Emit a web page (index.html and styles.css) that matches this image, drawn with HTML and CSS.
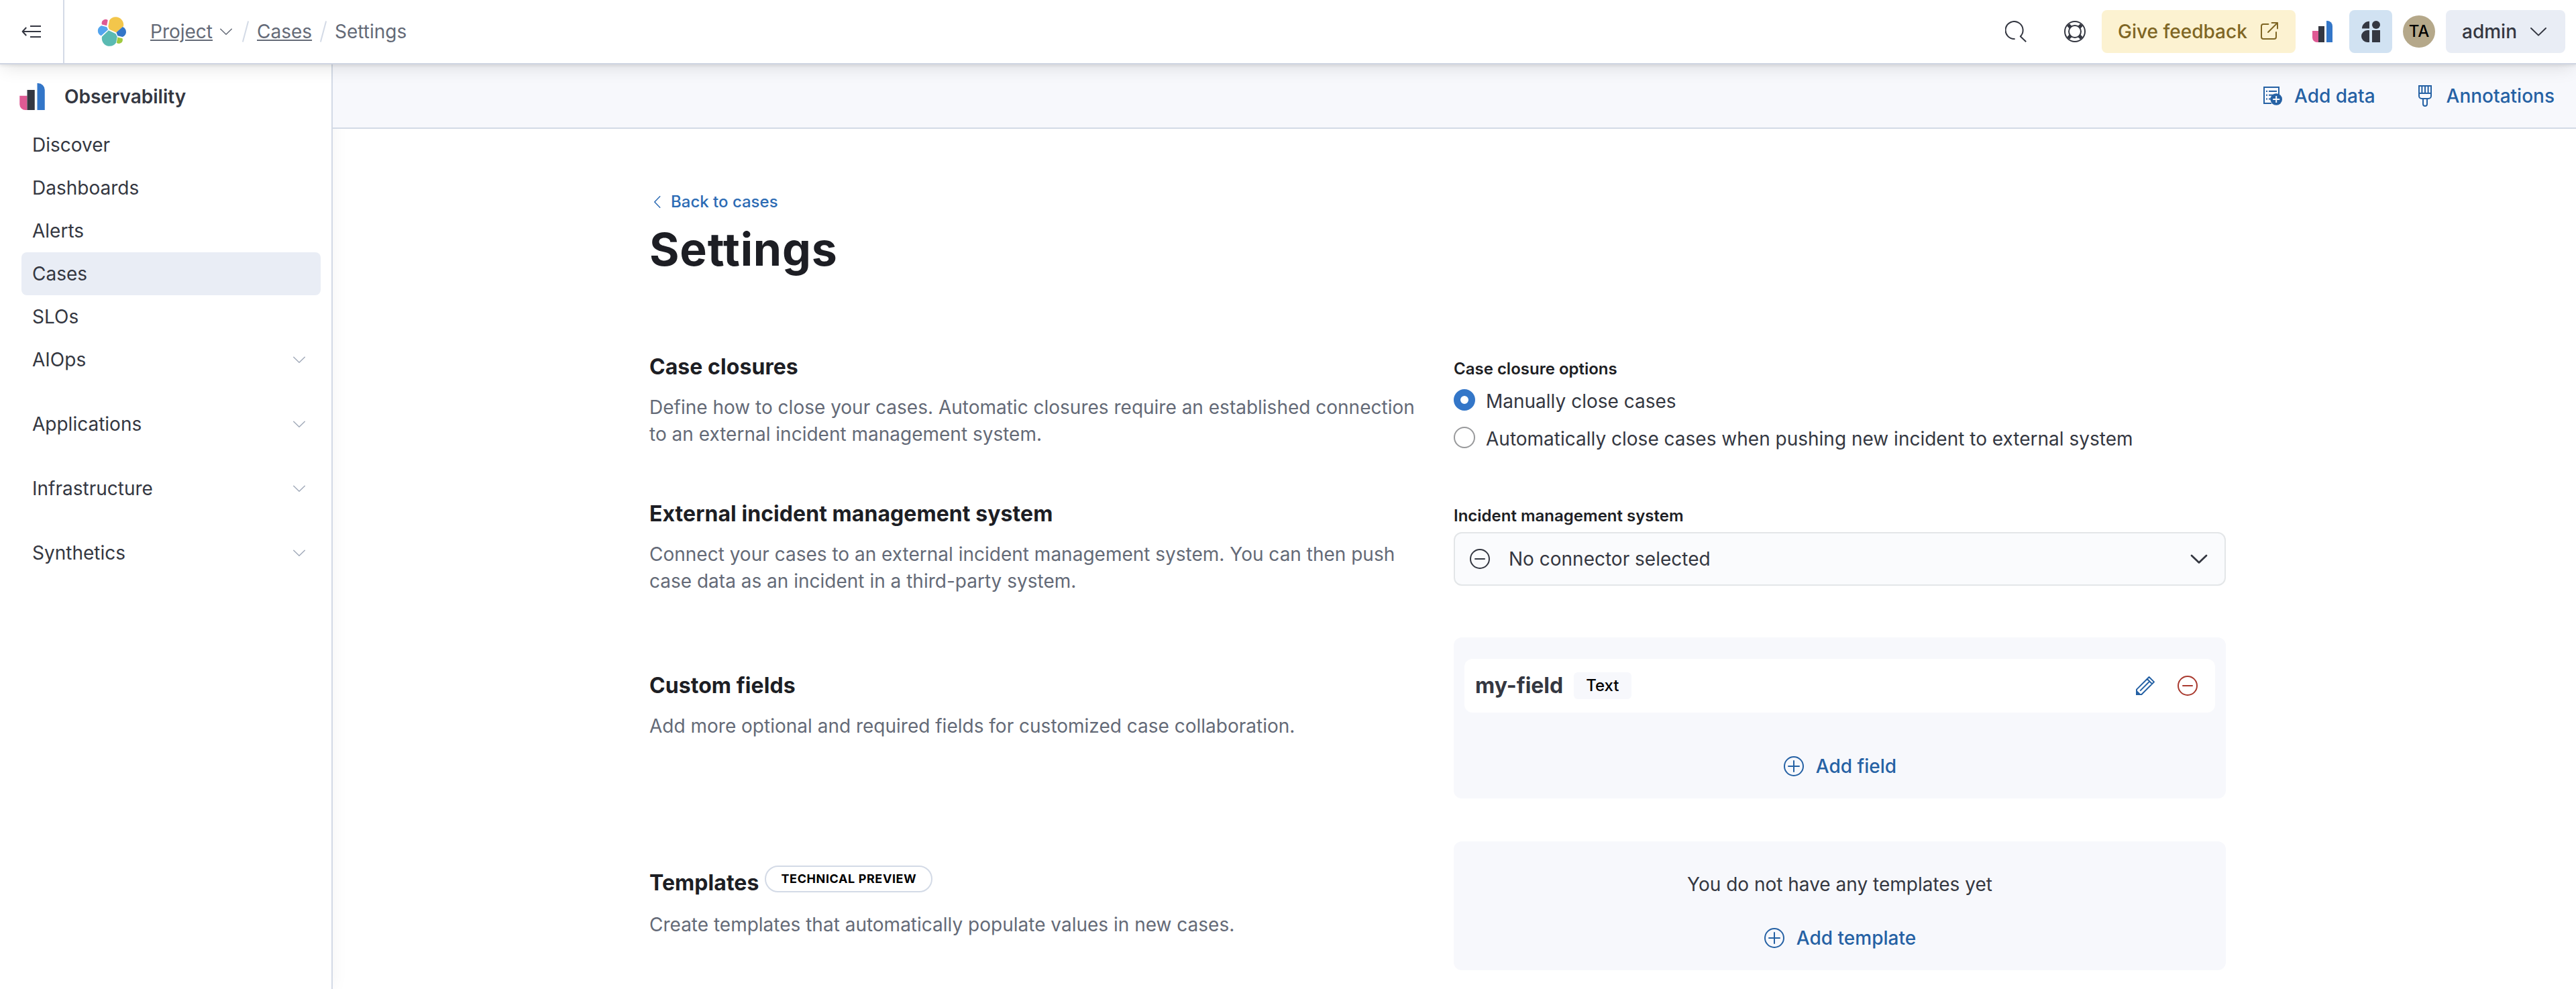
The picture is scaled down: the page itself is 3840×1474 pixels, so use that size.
FILE: index.html
```html
<!DOCTYPE html>
<html lang="en">
<head>
<meta charset="utf-8">
<title>Settings - Cases - Observability</title>
<link rel="stylesheet" href="styles.css">
</head>
<body>
<svg class="defs" aria-hidden="true">
  <symbol id="chevron" viewBox="0 0 16 16"><path fill="none" stroke="currentColor" stroke-linecap="round" stroke-linejoin="round" d="M2.5 5.5 8 10.8l5.5-5.3"/></symbol>
  <symbol id="obs-logo" viewBox="0 0 32 32">
    <path fill="#de5a94" d="M1 15h9v17H8a7 7 0 0 1-7-7z"/>
    <path fill="#343741" d="M10 8h9v24h-9z"/>
    <path fill="#3376c8" d="M22 0h1a8 8 0 0 1 8 8v24h-9z"/>
  </symbol>
  <symbol id="plus-circle" viewBox="0 0 16 16"><g fill="none" stroke="currentColor" stroke-linecap="round"><circle cx="8" cy="8" r="7"/><path d="M8 4v8M4 8h8"/></g></symbol>
  <symbol id="minus-circle" viewBox="0 0 16 16"><g fill="none" stroke="currentColor" stroke-linecap="round"><circle cx="8" cy="8" r="7"/><path d="M4.500 8h7"/></g></symbol>
</svg>

<header class="header">
  <button class="collapse" aria-label="Collapse navigation">
    <svg class="icon" viewBox="0 0 16 16"><g fill="none" stroke="currentColor" stroke-linejoin="round"><path d="M6.500 4h8M1 8h13.500M6.500 12h8M3.600 5 .800 8l2.800 3"/></g></svg>
  </button>
  <svg class="elastic" viewBox="0 0 32 32">
    <path fill="#f3c64b" d="M12.580 13.787l7.002 3.211 7.066-6.213a7.849 7.849 0 0 0 .152-1.557c0-4.287-3.464-7.762-7.737-7.762a7.708 7.708 0 0 0-6.354 3.349l-1.176 6.117z"/>
    <path fill="#5abab2" d="M5.333 21.214a7.984 7.984 0 0 0-.152 1.569c0 4.300 3.473 7.785 7.756 7.785a7.744 7.744 0 0 0 6.390-3.380l1.166-6.098-1.556-2.987-7.030-3.215z"/>
    <path fill="#de5a94" d="M5.288 9.067l4.800 1.137L11.140 4.730A3.785 3.785 0 0 0 5.065 7.750c0 .453.076.900.223 1.317z"/>
    <path fill="#53a4ee" d="M4.872 10.214c-2.145.711-3.645 2.778-3.645 5.044 0 2.207 1.360 4.177 3.402 4.958l6.734-6.109-1.236-2.652z"/>
    <path fill="#3376c8" d="M20.873 20.176l4.797 1.125c2.147-.712 3.648-2.779 3.648-5.046 0-2.203-1.363-4.170-3.408-4.950l-6.282 5.519z"/>
    <path fill="#9fc93f" d="M19.848 27.175a3.758 3.758 0 0 0 6.073-3.027c0-.457-.077-.903-.225-1.318l-4.797-1.125z"/>
  </svg>
  <nav class="crumbs">
    <a class="crumb link">Project</a><svg class="crumb-chevron"><use href="#chevron"/></svg>
    <i class="slash"></i><a class="crumb link">Cases</a><i class="slash"></i><span class="crumb">Settings</span>
  </nav>
  <div class="header-right">
    <svg class="icon search" viewBox="0 0 16 16"><path fill="none" stroke="currentColor" stroke-linejoin="round" d="M7.300 13.500A6.500 6.500 0 1 1 11.400 11.600l4.200 4"/></svg>
    <svg class="icon help" viewBox="0 0 16 16"><g fill="none" stroke="currentColor"><circle cx="8" cy="8" r="7.500"/><circle cx="8" cy="8" r="4.500"/><path stroke-width="2.600" d="m3 3 1.900 1.900M13 3l-1.900 1.900M3 13l1.900-1.900M13 13l-1.900-1.900"/></g></svg>
    <a class="feedback">Give feedback
      <svg class="icon" viewBox="0 0 16 16"><g fill="none" stroke="currentColor" stroke-linecap="round" stroke-linejoin="round"><path d="M7.700 2.500H4a1.500 1.500 0 0 0-1.500 1.500v8A1.500 1.500 0 0 0 4 13.500h8a1.500 1.500 0 0 0 1.500-1.500V8.500M7.500 8.500l7-7M10.300 1.500h4.200v4.200"/></g></svg>
    </a>
    <svg class="icon solution"><use href="#obs-logo"/></svg>
    <span class="apps"><svg class="icon" viewBox="0 0 16 16"><g fill="currentColor"><path d="M7 5.700H1.500C1.500 2.800 4 .400 7 .400zM7 16H5.500A4.500 4.500 0 0 1 5.500 7H7zM9 7h6v9H9z"/><circle cx="12" cy="3" r="3"/></g></svg></span>
    <span class="avatar">TA</span>
    <span class="admin">admin <svg class="icon"><use href="#chevron"/></svg></span>
  </div>
</header>

<div class="body">
  <aside class="side">
    <div class="side-title"><svg class="side-logo"><use href="#obs-logo"/></svg>Observability</div>
    <nav class="side-nav">
      <a class="item">Discover</a>
      <a class="item">Dashboards</a>
      <a class="item">Alerts</a>
      <a class="item selected">Cases</a>
      <a class="item">SLOs</a>
      <a class="item">AIOps<svg class="item-chevron"><use href="#chevron"/></svg></a>
      <a class="item group">Applications<svg class="item-chevron"><use href="#chevron"/></svg></a>
      <a class="item group">Infrastructure<svg class="item-chevron"><use href="#chevron"/></svg></a>
      <a class="item group">Synthetics<svg class="item-chevron"><use href="#chevron"/></svg></a>
    </nav>
  </aside>
  <div class="page">
    <div class="toolbar">
      <a class="action"><svg class="icon" viewBox="0 0 16 16"><path fill="none" stroke="currentColor" d="M7 13.500H1.500v-12h11V7M3 4.500h1M5 4.500h6M3 7.400h1M5 7.400h4M3 10.300h1M5 10.300h2"/><circle cx="10.600" cy="10.500" r="4.400" fill="currentColor"/><path stroke="#f7f8fc" d="M10.600 8v5M8.100 10.500h5"/></svg>Add data</a>
      <a class="action"><svg class="icon" viewBox="0 0 16 16"><path fill="none" stroke="currentColor" d="M3.500.500h9V8a2 2 0 0 1-2 2h-5a2 2 0 0 1-2-2zM3.500 6h9M5.700.500V6M8 .500V6M10.300.500V6M6.500 10v4a1.500 1.500 0 0 0 3 0v-4"/></svg>Annotations</a>
    </div>
    <main class="content">
      <a class="back"><svg class="back-chevron"><use href="#chevron"/></svg>Back to cases</a>
      <h1 class="title">Settings</h1>
      <section class="row closures">
        <div class="about">
          <h2 class="heading">Case closures</h2>
          <p class="desc">Define how to close your cases. Automatic closures require an established connection<br>to an external incident management system.</p>
        </div>
        <div class="field">
          <div class="label">Case closure options</div>
          <label class="option"><span class="radio on"></span>Manually close cases</label>
          <label class="option"><span class="radio"></span>Automatically close cases when pushing new incident to external system</label>
        </div>
      </section>
      <section class="row external">
        <div class="about">
          <h2 class="heading">External incident management system</h2>
          <p class="desc">Connect your cases to an external incident management system. You can then push<br>case data as an incident in a third-party system.</p>
        </div>
        <div class="field">
          <div class="label">Incident management system</div>
          <div class="select"><svg class="icon"><use href="#minus-circle"/></svg><span class="select-text">No connector selected</span><svg class="icon"><use href="#chevron" stroke-width="1.400"/></svg></div>
        </div>
      </section>
      <section class="row custom">
        <div class="about">
          <h2 class="heading">Custom fields</h2>
          <p class="desc">Add more optional and required fields for customized case collaboration.</p>
        </div>
        <div class="panel fields-panel">
          <div class="custom-field">
            <strong class="field-name">my-field</strong><span class="badge">Text</span>
            <svg class="icon edit" viewBox="0 0 16 16"><path fill="none" stroke="currentColor" stroke-linejoin="round" d="m11.300 1.500 3.700 3.700-9.300 9.300H2v-3.700zM9.900 3l3.600 3.600M4.600 11.800l7-7"/><path fill="currentColor" d="M1.500 10.800V15h4.200z"/></svg>
            <svg class="icon remove"><use href="#minus-circle"/></svg>
          </div>
          <a class="add"><svg class="icon"><use href="#plus-circle"/></svg>Add field</a>
        </div>
      </section>
      <section class="row templates">
        <div class="about">
          <h2 class="heading">Templates <span class="beta">Technical preview</span></h2>
          <p class="desc">Create templates that automatically populate values in new cases.</p>
        </div>
        <div class="panel templates-panel">
          <div class="empty">You do not have any templates yet</div>
          <a class="add"><svg class="icon"><use href="#plus-circle"/></svg>Add template</a>
        </div>
      </section>
    </main>
  </div>
</div>
</body>
</html>
```
FILE: styles.css
```css
* { box-sizing: border-box; }
body { margin: 0; width: 3840px; height: 1474px; overflow: hidden; background: #fff; color: #343741; font: 400 28px/40px Inter, "Liberation Sans", sans-serif; }
h1, h2, p { margin: 0; }
svg { display: block; flex: none; }
.defs { position: absolute; width: 0; height: 0; }
.icon { width: 32px; height: 32px; }

.header { position: relative; z-index: 2; display: flex; align-items: center; height: 96px; padding-right: 16px; background: #fff; border-bottom: 2px solid #cfd5e2; box-shadow: 0 2px 4px rgba(0,0,0,.07), 0 6px 26px -4px rgba(0,0,0,.14); }
.collapse { display: flex; align-items: center; justify-content: center; width: 96px; height: 94px; padding: 0 0 0 2px; border: 0; border-right: 2px solid #d3dae6; background: none; color: #343741; }
.elastic { width: 48px; height: 48px; margin-left: 48px; }
.crumbs { display: flex; align-items: center; margin-left: 32px; color: #646a77; }
.link { text-decoration: underline; }
.crumb-chevron { width: 24px; height: 24px; margin-left: 8px; }
.slash { width: 2px; height: 32px; margin: 0 16px; background: #d3dae6; transform: rotate(15deg); }
.header-right { display: flex; align-items: center; margin-left: auto; }
.help { margin: 0 24px 0 56px; }
.feedback { display: flex; align-items: center; justify-content: space-between; width: 289px; height: 64px; padding: 0 24px; border-radius: 8px; background: #fcf2d1; color: #7f6624; font-weight: 500; }
.solution { margin: 0 24px; }
.apps { display: flex; align-items: center; justify-content: center; width: 64px; height: 64px; border-radius: 8px; background: #d1e2f2; }
.avatar { width: 48px; height: 48px; margin: 0 16px; border-radius: 50%; background: #b5a88a; color: #000; font-size: 24px; line-height: 48px; font-weight: 500; text-align: center; }
.admin { display: flex; align-items: center; justify-content: space-between; width: 178px; height: 64px; padding: 0 24px; border-radius: 8px; background: #e9edf5; font-weight: 500; }

.body { display: flex; height: 1378px; }
.side { flex: none; width: 496px; border-right: 2px solid #d3dae6; box-shadow: 0 0 24px rgba(0,0,0,.05); }
.side-title { display: flex; align-items: center; gap: 28px; height: 88px; padding: 8px 0 0 28px; font-weight: 600; }
.side-logo { width: 40px; height: 40px; }
.side-nav { display: flex; flex-direction: column; padding: 0 16px 0 32px; }
.item { display: flex; align-items: center; justify-content: space-between; height: 64px; padding: 0 20px 0 16px; border-radius: 8px; }
.group { margin-top: 32px; }
.selected { background: #e9edf5; }
.item-chevron { width: 24px; height: 24px; color: #a2abba; }

.page { flex: 1; }
.toolbar { display: flex; align-items: center; justify-content: flex-end; gap: 58px; height: 96px; padding-right: 32px; background: #f7f8fc; border-bottom: 2px solid #d3dae6; }
.action, .add { display: flex; align-items: center; color: #2561a4; font-weight: 500; }
.action { gap: 16px; }

.content { width: 2350px; margin-left: 472px; padding-top: 89px; }
.back { display: flex; align-items: center; gap: 8px; height: 40px; color: #2c6bb4; font-size: 24px; font-weight: 500; }
.back-chevron { width: 24px; height: 24px; transform: rotate(90deg); }
.title { height: 80px; margin-top: 10px; color: #1d1e24; font-size: 68px; line-height: 80px; font-weight: 700; letter-spacing: .8px; }
.row { display: grid; grid-template-columns: 1175px 1151px; column-gap: 24px; }
.heading { color: #1d1e24; font-size: 32px; line-height: 48px; font-weight: 700; letter-spacing: .06px; }
.desc { margin-top: 16px; color: #646a77; }
.closures { margin-top: 112px; height: 219px; }
.label { margin-bottom: 3px; color: #1d1e24; font-size: 24px; line-height: 36px; font-weight: 600; }
.field { padding-top: 9px; }
.closures .label { margin-bottom: 2px; }
.option { display: flex; align-items: center; gap: 16px; height: 56px; }
.radio { width: 32px; height: 32px; margin-bottom: 4px; border: 2px solid #98999b; border-radius: 50%; }
.radio.on { border: 10px solid #3376c8; }
.external { height: 208px; }
.select { display: flex; align-items: center; height: 80px; margin-top: 6px; padding: 0 22px 0 21px; border: 2px solid #e3e6e8; border-radius: 12px; background: #fafbfd; }
.select-text { flex: 1; margin-left: 27px; }
.panel { display: flex; flex-direction: column; align-items: center; border-radius: 12px; background: #f7f8fc; }
.custom { height: 304px; }
.fields-panel { height: 240px; padding: 32px 16px 0; }
.custom .about { padding-top: 48px; }
.custom-field { display: flex; align-items: center; align-self: stretch; height: 80px; padding: 0 25px 0 16px; border-radius: 12px; background: #fff; }
.field-name { font-size: 32px; font-weight: 700; }
.badge { height: 40px; margin-left: 16px; padding: 0 18px; border-radius: 6px; background: #f7f8fc; color: #000; font-size: 24px; font-weight: 500; }
.edit { margin-left: auto; color: #2561a4; }
.remove { margin-left: 32px; color: #a93a2f; }
.add { gap: 17px; }
.fields-panel .add { margin-top: 60px; }
.templates .about { padding-top: 36px; }
.templates .heading { display: flex; align-items: center; gap: 9px; }
.templates .desc { margin-top: 16px; }
.beta { height: 40px; margin-bottom: 12px; padding: 0 22px; border: 2px solid #d3dae6; border-radius: 20px; color: #000; font-size: 18px; line-height: 36px; letter-spacing: .6px; font-weight: 700; text-transform: uppercase; }
.templates-panel { height: 192px; padding-top: 44px; }
.templates-panel .add { margin-top: 40px; }
```
